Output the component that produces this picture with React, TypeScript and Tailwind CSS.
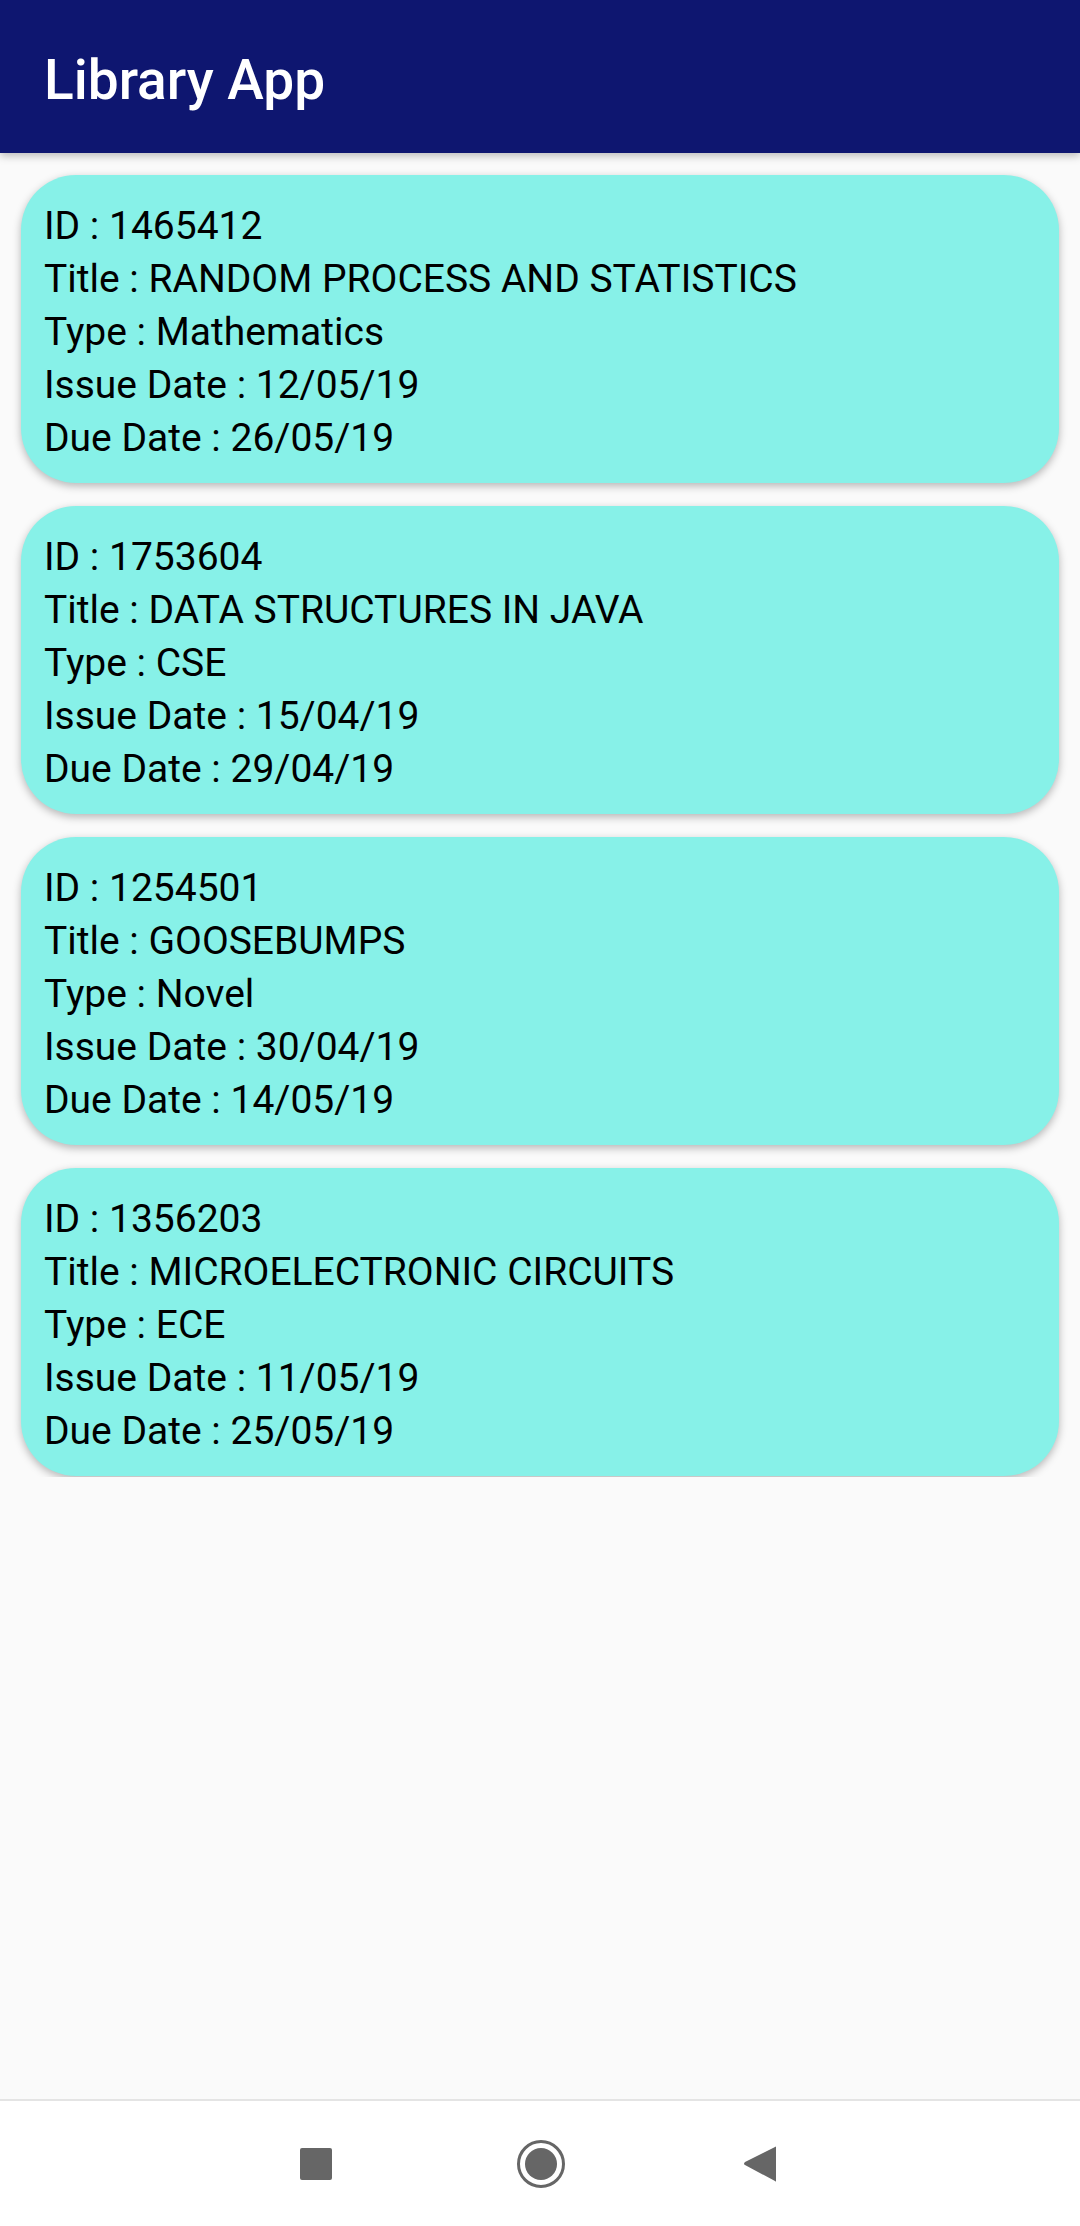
const books = [
  { id: "1465412", title: "RANDOM PROCESS AND STATISTICS", type: "Mathematics", issue: "12/05/19", due: "26/05/19" },
  { id: "1753604", title: "DATA STRUCTURES IN JAVA", type: "CSE", issue: "15/04/19", due: "29/04/19" },
  { id: "1254501", title: "GOOSEBUMPS", type: "Novel", issue: "30/04/19", due: "14/05/19" },
  { id: "1356203", title: "MICROELECTRONIC CIRCUITS", type: "ECE", issue: "11/05/19", due: "25/05/19" },
];

const BookCard = ({ book }: { book: (typeof books)[number] }) => {
  return (
    <div className="h-[308px] shrink-0 rounded-[55px] bg-[#87f1e8] pl-[23px] pt-[25px] text-[39px] leading-[53px] text-black shadow-[0_3px_8px_rgba(0,0,0,0.28)]">
      <p>ID : {book.id}</p>
      <p>Title : {book.title}</p>
      <p>Type : {book.type}</p>
      <p>Issue Date : {book.issue}</p>
      <p>Due Date : {book.due}</p>
    </div>
  );
};

const App = () => {
  return (
    <div className="flex h-[2226px] w-[1080px] flex-col bg-[#fafafa] font-['Roboto',sans-serif]">
      <header className="relative z-10 flex h-[153px] shrink-0 items-center bg-[#0e1670] pl-[44px] shadow-[0_3px_8px_rgba(0,0,0,0.25)]">
        <h1 className="pt-[7px] text-[55px] font-medium text-white">Library App</h1>
      </header>

      <main className="flex-1">
        <div className="flex h-[1324px] flex-col gap-[23px] overflow-hidden px-[21px] pt-[22px]">
          {books.map((b) => (
            <BookCard key={b.id} book={b} />
          ))}
        </div>
      </main>

      <nav className="flex h-[127px] shrink-0 items-center border-t-2 border-[#e4e4e4] bg-white">
        <div className="absolute left-[300px] h-[32px] w-[32px] rounded-[2px] bg-[#666666]" />
        <svg className="absolute left-[516px]" width="50" height="50" viewBox="0 0 50 50">
          <circle cx="25" cy="25" r="22.5" fill="none" stroke="#666666" strokeWidth="3" />
          <circle cx="25" cy="25" r="16" fill="#666666" />
        </svg>
        <svg className="absolute left-[742px]" width="36" height="38" viewBox="0 0 36 38">
          <path d="M34 2 L34 36 Q34 37 33 36 L3 20 Q1 19 3 17 L33 2 Q34 1 34 2 Z" fill="#666666" />
        </svg>
      </nav>
    </div>
  );
};

export default App;
